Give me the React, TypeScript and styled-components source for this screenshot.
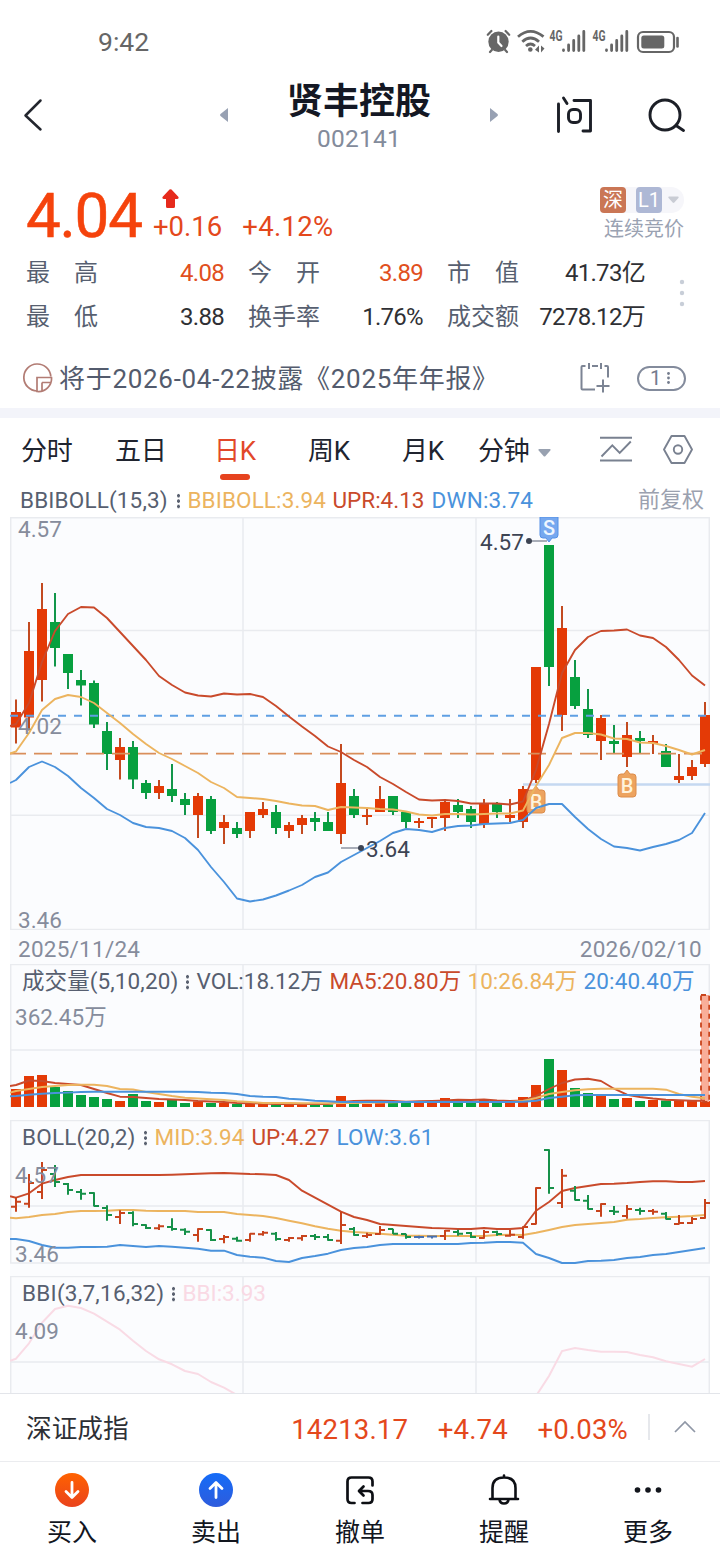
import React from 'react';
import styled, { createGlobalStyle } from 'styled-components';

const RED = '#e43a06';
const GREEN = '#07a03f';
const INK = '#575f70';
const MUTED = '#868c9c';
const LINE_RED = '#c94a2b';
const LINE_GOLD = '#ecb45f';
const LINE_BLUE = '#4a92dc';
const GRID = '#e9ebef';

const GlobalStyle = createGlobalStyle`
  * { box-sizing: border-box; }
  body {
    margin: 0;
    background: #fff;
    font-family: Roboto, "Noto Sans CJK SC", sans-serif;
    line-height: 1.2;
    -webkit-font-smoothing: antialiased;
  }
  svg { display: block; flex: none; }
`;

const Screen = styled.div`
  width: 720px;
  height: 1560px;
  display: flex;
  flex-direction: column;
  overflow: hidden;
  background: #fff;
`;

/* ---------- status bar ---------- */
const StatusBar = styled.header`
  height: 76px;
  padding: 8px 41px 0 98px;
  display: flex;
  align-items: center;
  justify-content: space-between;
  color: #666;
  font-size: 26.5px;
`;

/* ---------- title bar ---------- */
const TitleBar = styled.div`
  height: 82px;
  display: grid;
  grid-template-columns: 220px 278px 222px;
  align-items: center;
`;
const BackCell = styled.div`
  display: flex;
  align-items: center;
  padding: 0 0 4px 23px;
`;
const Switcher = styled.div`
  display: flex;
  justify-content: space-between;
  align-items: center;
  > svg { margin-top: -4px; }
`;
const StockTitle = styled.div`
  display: flex;
  flex-direction: column;
  align-items: center;
`;
const StockName = styled.h1`
  margin: 0;
  font-size: 36px;
  line-height: 44px;
  font-weight: 700;
  color: #141824;
`;
const StockCode = styled.div`
  font-size: 24.5px;
  line-height: 30px;
  letter-spacing: 0.2px;
  color: #838b9b;
`;
const TitleActions = styled.div`
  display: flex;
  align-items: center;
  gap: 52px;
  padding: 0 0 4px 56px;
`;

/* ---------- quote ---------- */
const Quote = styled.section`
  height: 250px;
  padding: 24px 34px 0 26px;
`;
const PriceRow = styled.div`
  height: 68px;
  display: flex;
  align-items: flex-start;
`;
const Price = styled.div`
  width: 127px;
  font-size: 62px;
  line-height: 68px;
  letter-spacing: -1.3px;
  color: #f5430c;
  -webkit-text-stroke: 0.5px #f5430c;
`;
const Change = styled.div`
  flex: 1;
  display: flex;
  flex-direction: column;
  padding-top: 7px;
  color: #e4481c;
  font-size: 27.5px;
  line-height: 38px;
  svg { margin-left: 9px; }
`;
const ChangeValues = styled.div`
  display: flex;
  gap: 20px;
  span + span { letter-spacing: 0.3px; }
`;
const Market = styled.div`
  display: flex;
  flex-direction: column;
  align-items: flex-end;
  padding-top: 5px;
  margin-right: 2px;
  color: #9aa2b2;
  font-size: 20px;
  line-height: 32px;
`;
const TagPill = styled.div`
  width: 84px;
  height: 26px;
  display: flex;
  align-items: center;
  border-radius: 5px 13px 13px 5px;
  background: #f6f6fa;
`;
const Tag = styled.span<{ $bg: string; $gap: number }>`
  width: 26px;
  height: 26px;
  margin-right: ${p => p.$gap}px;
  border-radius: 4px;
  background: ${p => p.$bg};
  color: #fff;
  font-size: 20px;
  line-height: 27px;
  text-align: center;
`;
const StatsArea = styled.div`
  display: flex;
  justify-content: space-between;
`;
const Stats = styled.dl`
  margin: 0;
  padding-top: 1px;
  display: grid;
  grid-template-columns: 73px 125px 24px 72px 103px 24px 72px 126px;
  grid-auto-rows: 44px;
  align-items: center;
  font-size: 24px;
  color: #333;
`;
const StatLabel = styled.dt<{ $col: number }>`
  grid-column: ${p => p.$col};
  color: ${INK};
`;
const StatValue = styled.dd<{ $hot?: boolean }>`
  margin: 0;
  text-align: right;
  white-space: nowrap;
  letter-spacing: -0.7px;
  color: ${p => (p.$hot ? '#e14f20' : '#2f3034')};
`;
const Notice = styled.div`
  height: 78px;
  margin-left: -3px;
  display: flex;
  align-items: center;
  font-size: 26px;
  color: #535b6d;
`;
const NoticeText = styled.span`
  flex: 1;
  margin-left: 6px;
  padding-top: 3px;
  letter-spacing: 0.7px;
  white-space: nowrap;
`;
const CountPill = styled.span`
  width: 49px;
  height: 25px;
  margin-left: 27px;
  padding-right: 3px;
  display: flex;
  align-items: center;
  justify-content: center;
  gap: 6px;
  border: 2px solid #838b9c;
  border-radius: 13px;
  font-size: 20px;
  line-height: 21px;
  color: #747c8d;
`;
const Band = styled.div`
  height: 10px;
  background: #f3f4fa;
`;

/* ---------- period tabs ---------- */
const Tabs = styled.nav`
  height: 66px;
  padding: 0 0 0 21px;
  display: grid;
  grid-template-columns: 94px 99px 94px 94px 76px 122px 63px 1fr;
  align-items: center;
  font-size: 26px;
  color: #20242f;
  > svg { margin-top: -3px; }
`;
const Tab = styled.div<{ $active?: boolean }>`
  position: relative;
  width: max-content;
  height: 66px;
  padding-top: 2px;
  display: flex;
  align-items: center;
  gap: 9px;
  letter-spacing: -0.3px;
  color: ${p => (p.$active ? '#e2482a' : 'inherit')};
  svg { margin-top: 1px; }
  &::after {
    content: '';
    display: ${p => (p.$active ? 'block' : 'none')};
    position: absolute;
    left: 6px;
    bottom: 4px;
    width: 30px;
    height: 6px;
    border-radius: 3px;
    background: #e6431f;
  }
`;

/* ---------- charts ---------- */
const Charts = styled.main`
  height: 909px;
  padding: 0 10px;
  overflow: hidden;
`;
const Legend = styled.div<{ $over?: boolean }>`
  ${p => (p.$over ? 'position: absolute; left: 12px; top: 1px; width: 688px;' : 'padding: 0 6px 0 10px;')}
  height: 33px;
  display: flex;
  align-items: center;
  font-size: 22.5px;
  white-space: nowrap;
`;
const LegendItem = styled.span<{ $w: number; $c: string; $ls?: number }>`
  width: ${p => p.$w}px;
  flex: none;
  color: ${p => p.$c};
  letter-spacing: ${p => p.$ls ?? 0}px;
`;
const LegendDots = styled.i`
  width: 2.5px;
  height: 16px;
  margin-right: 8px;
  background: radial-gradient(circle at 50% 50%, #5a6170 1.4px, transparent 1.7px) 0 0 / 2.5px 5.4px;
`;
const Adjust = styled.span`
  margin-left: auto;
  font-size: 22px;
  color: #9ba1af;
`;
const Panel = styled.section<{ $h: number }>`
  position: relative;
  height: ${p => p.$h}px;
  background: #fbfcfe;
  overflow: hidden;
`;
const DateRow = styled.div`
  height: 34px;
  display: flex;
  align-items: center;
  justify-content: space-between;
  padding: 5px 8px 0;
  background: #fbfcfe;
  font-size: 22.5px;
  letter-spacing: 0.25px;
  color: ${MUTED};
`;

/* ---------- bottom ---------- */
const IndexBar = styled.div`
  height: 69px;
  padding: 3px 24px 0 26px;
  display: flex;
  align-items: center;
  border-top: 1.5px solid #e3e5ea;
  border-bottom: 1px solid #ebecef;
  font-size: 27.6px;
  color: #e4481c;
  background: #fff;
  svg { margin-top: -5px; }
`;
const IndexName = styled.span`
  width: 266px;
  font-size: 25.7px;
  color: #2d2f35;
`;
const IndexValue = styled.span<{ $w: number }>`
  width: ${p => p.$w}px;
  padding-top: 1px;
  letter-spacing: 0.15px;
`;
const Divider = styled.i`
  width: 2px;
  height: 26px;
  margin: -5px 24px 0 0;
  background: #e6e8ec;
`;
const NavBar = styled.footer`
  height: 98px;
  display: grid;
  grid-template-columns: repeat(5, 1fr);
  font-size: 25px;
  line-height: 32px;
  color: #12161f;
`;
const NavItem = styled.div`
  display: flex;
  flex-direction: column;
  align-items: center;
  padding-top: 11px;
  gap: 10px;
`;

/* ---------- data ---------- */
const X0 = 16;
const STEP = 13;
const xAt = (i: number) => X0 + STEP * i;

// high, low, body top, body bottom, rising
type Candle = [number, number, number, number, 0 | 1];
const candles: Candle[] = [
  [699.5, 743.5, 712, 727.5, 1], [622, 730.5, 651, 717.5, 1], [583, 701.5, 609, 680, 1], [593, 666.5, 622, 648, 0],
  [654, 689, 654, 673, 0], [670, 705.5, 680, 685.5, 0], [680.5, 728, 683, 724.5, 0], [722, 770, 731, 754, 0],
  [738, 779.5, 747, 760, 1], [741, 789, 747, 779.5, 0], [780, 799, 783, 793, 0], [780, 799, 786, 793, 1],
  [764, 802, 789, 796, 0], [793, 815, 799, 805, 0], [793, 838, 796, 815, 1], [796, 834, 799, 831, 0],
  [815, 844, 822, 828, 1], [822, 838, 828, 834, 0], [812, 838, 812, 831, 1], [802, 818, 809, 815, 1],
  [805, 834, 812, 828, 0], [822, 838, 825, 831, 1], [815, 834, 818, 825, 1], [812, 831, 818, 822, 0],
  [812, 831, 822, 831, 0], [744, 844, 783, 834, 1], [789, 818, 796, 815, 0], [809, 825, 815, 817, 1],
  [786, 812, 799, 812, 1], [796, 815, 796, 812, 0], [812, 828, 812, 822, 0], [818, 828, 821, 823, 1],
  [817, 828, 817, 819, 1], [799, 831, 802, 818, 1], [799, 818, 805, 812, 0], [806, 828, 809, 822, 0],
  [799, 828, 803, 824, 1], [802, 818, 803, 812, 0], [799, 822, 815, 818, 1], [786, 828, 789, 822, 1],
  [667, 783, 667, 780, 1], [545, 686, 545, 667, 0], [606, 731, 628, 715, 1], [660, 709, 677, 706, 0],
  [689, 738, 709, 735, 0], [715, 760, 718, 741, 1], [725, 753, 741, 744, 0], [722, 767, 735, 757, 1],
  [731, 753, 738, 741, 0], [735, 754, 741, 743, 1], [744, 767, 751, 767, 0], [754, 783, 776, 780, 1],
  [760, 780, 767, 776, 1], [702, 767, 715, 764, 1],
];

const upr = [726, 724, 703, 662, 631, 614, 607, 607.5, 618, 632, 646, 660, 676, 685, 692.5, 695.5, 696.5, 693.5, 694.5, 694, 697, 706, 716.5, 726.5, 736, 746.5, 752, 760, 767, 777, 784, 792, 799.5, 800.5, 800, 801, 803.5, 803.5, 803.5, 804.5, 801.5, 770, 724, 673, 650, 637, 631, 630.5, 629.5, 635.5, 638, 647, 660, 675.5, 685.5];
const bbiMid = [753.5, 751.5, 733, 710, 699, 695, 697, 703, 713, 723, 734, 744, 753, 759, 766, 773, 782, 788, 797, 798, 799, 801, 803.5, 805.5, 806, 810, 807, 807.5, 808, 809, 809.5, 811.5, 814.5, 815.5, 814, 814, 814.5, 814, 813.5, 813.5, 810.5, 786, 765, 738, 733, 733, 734.5, 738.5, 739, 742.5, 743, 746, 750, 754.5, 750];
const dwn = [783, 780, 767, 761.5, 767, 776, 788, 798, 809, 815, 823, 827, 828, 831, 838, 850, 867, 882, 898.5, 901.5, 899.5, 895.5, 890.5, 885, 877, 872.5, 862, 855, 848, 841, 833, 829, 830, 832, 828, 826, 825.5, 824, 823.5, 823, 820, 808, 804, 804, 817, 829, 839, 846.5, 848, 850.5, 847, 844, 840, 833, 813];

const volumes = [1089, 1076, 1075, 1087, 1091, 1095, 1097, 1099, 1101, 1094, 1101, 1102, 1100, 1103, 1101.5, 1103, 1103, 1104, 1104, 1104, 1104.5, 1104.5, 1104.5, 1105, 1104.5, 1096, 1103, 1104, 1103, 1103, 1103, 1103, 1102, 1098, 1099, 1102, 1100, 1102, 1102.5, 1097, 1085, 1059, 1070, 1088, 1093, 1095, 1099, 1098, 1101, 1100, 1100.5, 1101, 1101, 1101];
const ma5 = [1086, 1085, 1080.5, 1081, 1083, 1084, 1085, 1089, 1093, 1096.7, 1097, 1098, 1099, 1099.5, 1100, 1101, 1101.5, 1102, 1103, 1103.3, 1103.6, 1104, 1104, 1104, 1104, 1104, 1102, 1101, 1100.7, 1100.7, 1101, 1101.7, 1101.3, 1101, 1100.5, 1099.7, 1100, 1099.5, 1100.5, 1101, 1100.5, 1096, 1089, 1083, 1079.5, 1078.7, 1081, 1088.7, 1094.7, 1097, 1098.5, 1099.7, 1100.3, 1100.7, 1100.7];
const ma10 = [1092.7, 1091, 1089, 1087, 1086, 1085, 1084.7, 1084.7, 1086, 1089, 1089.5, 1092, 1094, 1096, 1097.7, 1098.5, 1099.3, 1100, 1101.3, 1102, 1103, 1103, 1103, 1103.3, 1103.3, 1103.3, 1103, 1103, 1102.7, 1102.5, 1102.3, 1102, 1102, 1102, 1102, 1102, 1102, 1102, 1102, 1102, 1101, 1098, 1094, 1092, 1090.3, 1089.3, 1088.7, 1088.7, 1088.7, 1088.7, 1088.7, 1089.7, 1094, 1096.7, 1098.3];
const ma20 = [1096.3, 1096, 1094.7, 1093.7, 1093, 1092.6, 1092, 1091.7, 1091.7, 1091.7, 1091.7, 1091.7, 1091.7, 1091.7, 1091.7, 1092, 1092.7, 1093, 1094, 1096, 1096.7, 1097, 1098.7, 1099.5, 1100.7, 1101.3, 1102, 1102, 1102, 1102, 1102, 1102, 1102, 1102, 1102, 1102, 1102, 1102, 1102, 1102, 1101.7, 1100.7, 1098, 1096.7, 1095.3, 1095, 1095, 1095, 1095, 1095, 1095, 1095, 1095, 1095, 1095];

// high, low, open, close, colour key
type Ohlc = [number, number, number, number, 'r' | 'g' | 'b'];
const ohlc: Ohlc[] = [
  [1197, 1211.7, 1206.7, 1201.7, 'r'], [1174, 1207.7, 1203.7, 1183, 'r'], [1162, 1199, 1192, 1170, 'r'], [1165, 1187, 1174, 1182, 'g'],
  [1183, 1194.7, 1184, 1190, 'g'], [1189, 1199.7, 1192, 1193.7, 'g'], [1192.3, 1206.5, 1193, 1206, 'g'], [1205.3, 1220.7, 1208, 1215, 'g'],
  [1210.3, 1224, 1217, 1213, 'r'], [1211.3, 1226.3, 1213, 1224, 'g'], [1224.3, 1229, 1225, 1228, 'g'], [1224.3, 1230, 1228.3, 1226.3, 'r'],
  [1218.3, 1230.7, 1227, 1229, 'g'], [1228.3, 1235, 1229.7, 1231.7, 'g'], [1228.3, 1241.7, 1235, 1229, 'r'], [1229.3, 1241, 1230, 1240, 'g'],
  [1235, 1243.3, 1239, 1237, 'r'], [1236.7, 1241.7, 1238.7, 1240.7, 'g'], [1233.3, 1241.7, 1240, 1233.7, 'r'], [1231, 1235.7, 1234.3, 1232.7, 'r'],
  [1232, 1240.7, 1233.7, 1239, 'g'], [1237, 1241.7, 1240, 1238, 'r'], [1235, 1240.7, 1238.3, 1236, 'r'], [1234, 1240, 1236, 1237, 'g'],
  [1234, 1240.7, 1237, 1240, 'g'], [1211.7, 1244, 1240.7, 1225, 'r'], [1227, 1235.7, 1229, 1235, 'g'], [1232.7, 1238, 1236, 1235, 'r'],
  [1226, 1234.7, 1234, 1230, 'r'], [1228.7, 1234, 1229, 1233.7, 'g'], [1233.7, 1238.7, 1234, 1237, 'g'], [1235.7, 1238.5, 1237, 1237, 'b'],
  [1235.7, 1238.5, 1236.5, 1236.5, 'b'], [1230, 1240, 1236, 1230.7, 'r'], [1229.7, 1235.7, 1232, 1233.7, 'g'], [1232, 1238, 1233, 1237, 'g'],
  [1230, 1238.7, 1238, 1232, 'r'], [1230.7, 1235.7, 1232, 1234, 'g'], [1230, 1236.7, 1235.7, 1234.7, 'r'], [1226.3, 1238.7, 1237, 1227, 'r'],
  [1187.3, 1224.5, 1224, 1188, 'r'], [1149.3, 1193.7, 1150, 1188, 'g'], [1169, 1208, 1203, 1175.7, 'r'], [1186, 1200.5, 1190.7, 1200, 'g'],
  [1195, 1209.5, 1200.7, 1209, 'g'], [1203.3, 1216.7, 1211, 1204, 'r'], [1206, 1215, 1211, 1211.7, 'g'], [1205, 1218.7, 1216, 1209, 'r'],
  [1207.7, 1214.7, 1210, 1211, 'g'], [1209, 1214.7, 1211, 1211.7, 'r'], [1212, 1219.5, 1213.7, 1219, 'g'], [1215, 1224.5, 1224, 1223, 'r'],
  [1217, 1224, 1223, 1219, 'r'], [1199, 1218.7, 1218, 1203, 'r'],
];
const bollUp = [1196.3, 1197.7, 1193.3, 1183.7, 1180, 1177, 1175, 1175, 1175, 1175, 1175, 1175, 1175, 1174.7, 1174.2, 1173.8, 1173.3, 1173, 1173.5, 1174, 1174.2, 1175, 1180, 1190.7, 1197.7, 1204.7, 1211.7, 1217, 1220, 1224, 1225, 1226, 1227, 1228, 1228.4, 1229, 1229, 1228, 1229, 1229, 1228, 1210.7, 1202, 1191, 1188, 1186, 1184, 1183.7, 1183, 1182, 1181.2, 1181.2, 1182, 1182, 1181];
const bollMid = [1217.7, 1218.3, 1217, 1215, 1214, 1212, 1211, 1211, 1210.7, 1210, 1210, 1210.7, 1211, 1211, 1211, 1212, 1212, 1212, 1214, 1215, 1216, 1218, 1220.7, 1223.3, 1226.3, 1228.7, 1230.7, 1232, 1232.7, 1233.7, 1234.7, 1235.7, 1235.7, 1236, 1236, 1236, 1236, 1236, 1235, 1234.7, 1235, 1232.7, 1230, 1227, 1225, 1224, 1223, 1222, 1219.7, 1219, 1218, 1217.3, 1216.7, 1216, 1215];
const bollLow = [1239, 1239, 1241, 1245, 1247.7, 1247.7, 1247, 1247, 1246.7, 1245, 1246, 1247, 1246, 1246.7, 1247.7, 1248.7, 1250.7, 1250.7, 1255, 1256.7, 1257.7, 1261, 1262, 1258, 1256, 1253.7, 1250, 1248, 1247, 1245, 1244, 1244, 1244, 1244, 1244, 1244, 1243, 1242.7, 1242, 1242, 1242.7, 1254, 1258, 1263, 1263, 1261, 1260.7, 1260, 1258, 1257, 1255, 1254, 1252, 1250, 1248];
const bbiLeft = [1360.7, 1358.7, 1343.3, 1322.7, 1309, 1305.7, 1308, 1313.7, 1321.7, 1329.7, 1340.7, 1351, 1359.3, 1364.3, 1371, 1374, 1382, 1387.7, 1395];
const bbiRight = [1396, 1376, 1351, 1348, 1350, 1351.7, 1351.7, 1352, 1355, 1357.3, 1361.3, 1364, 1366.7, 1359];

/* ---------- chart parts ---------- */
// The first value sits on the plot's left edge, the others on successive bars.
const edgeLine = (ys: number[]) => ys.map((y, i) => `${i === 0 ? 10 : xAt(i - 1)},${y}`).join(' ');

const Curve = ({ ys, color, width = 1.9 }: { ys: number[]; color: string; width?: number }) => (
  <polyline points={edgeLine(ys)} fill="none" stroke={color} strokeWidth={width} strokeLinejoin="round" />
);

const Grid = ({ top, bottom, rows }: { top: number; bottom: number; rows: number[] }) => (
  <g stroke={GRID} strokeWidth="1.5">
    {rows.map(y => <line key={y} x1="10" x2="710" y1={y} y2={y} />)}
    {[10.7, 243, 476, 709.3].map(x => <line key={x} x1={x} x2={x} y1={top} y2={bottom} />)}
  </g>
);

const Plot = ({ top, height, children }: { top: number; height: number; children: React.ReactNode }) => (
  <svg width="700" height={height} viewBox={`10 ${top} 700 ${height}`} fontSize="22.5">{children}</svg>
);

const BuyMark = ({ x, y }: { x: number; y: number }) => (
  <g>
    <path d={`M${x - 3} ${y} l3 -4 l3 4 h3 q3 0 3 3 v17 q0 3 -3 3 h-12 q-3 0 -3 -3 v-17 q0 -3 3 -3z`} fill="#eda35f" stroke="#dc8c4b" strokeWidth="1" />
    <text x={x} y={y + 18.5} textAnchor="middle" fontSize="20" fontWeight="500" fill="#fff3dc">B</text>
  </g>
);

const PriceChart = () => (
  <Plot top={517} height={413}>
    <Grid top={517} bottom={930} rows={[517.7, 630.5, 724.5, 815.3, 929.5]} />
    <line x1="523" x2="710" y1="784.5" y2="784.5" stroke="#c5d8f1" strokeWidth="2.6" />
    {candles.map(([hi, lo, t, b, up], i) => (
      <g key={i} fill={up ? RED : GREEN}>
        <rect x={xAt(i) - 1} y={hi} width="2" height={lo - hi} fill={up ? '#c34a20' : '#12964a'} />
        <rect x={xAt(i) - 5} y={t} width="10" height={b - t} />
      </g>
    ))}
    <line x1="10" x2="710" y1="715.7" y2="715.7" stroke="#5f9fe3" strokeWidth="2" strokeDasharray="8 8" />
    <line x1="8" x2="710" y1="753.7" y2="753.7" stroke="#d98e5b" strokeWidth="1.8" strokeDasharray="18 8" />
    <BuyMark x={536} y={790} />
    <BuyMark x={627} y={774} />
    <Curve ys={upr} color={LINE_RED} />
    <Curve ys={bbiMid} color={LINE_GOLD} />
    <Curve ys={dwn} color={LINE_BLUE} />
    <path d="M540 517 h18 v18 q0 3 -3 3 h-3 l-3 4 l-3 -4 h-3 q-3 0 -3 -3z" fill="#76a8ef" stroke="#5590e6" strokeWidth="1" />
    <text x="549" y="534.5" textAnchor="middle" fontSize="20" fontWeight="500" fill="#eef6ff">S</text>
    <g stroke="#8d93a0" strokeWidth="1.5">
      <line x1="529" x2="547" y1="541" y2="541" />
      <line x1="341" x2="361" y1="848" y2="848" />
    </g>
    <g fill="#3d4453">
      <circle cx="529" cy="541" r="3" />
      <circle cx="361" cy="848" r="3" />
      <text x="480" y="550">4.57</text>
      <text x="366" y="857">3.64</text>
    </g>
    <g fill={MUTED}>
      <text x="18" y="537">4.57</text>
      <text x="18" y="734">4.02</text>
      <text x="18" y="928">3.46</text>
    </g>
  </Plot>
);

const VolumeChart = () => (
  <Plot top={964} height={156}>
    <Grid top={964} bottom={1107} rows={[964.5, 1050]} />
    {volumes.map((y, i) => (
      <rect key={i} x={xAt(i) - 5} y={y} width="10" height={1107 - y} fill={candles[i][4] ? RED : GREEN} />
    ))}
    <rect x="701" y="995" width="8.2" height="107" fill="#f9ae99" stroke="#c9441c" strokeWidth="1.8" strokeDasharray="5 4" />
    <Curve ys={ma5} color={LINE_RED} />
    <Curve ys={ma10} color={LINE_GOLD} />
    <Curve ys={ma20} color={LINE_BLUE} />
    <text x="15" y="1025" fill={MUTED} fontSize="22.5">362.45万</text>
  </Plot>
);

const ohlcColor = { r: '#c8431c', g: '#169149', b: '#476fb0' };

const BollChart = () => (
  <Plot top={1120} height={156}>
    <Grid top={1120} bottom={1263} rows={[1120.5, 1206, 1263]} />
    <Curve ys={bollUp} color={LINE_RED} />
    <Curve ys={bollMid} color={LINE_GOLD} />
    <Curve ys={bollLow} color={LINE_BLUE} />
    {ohlc.map(([hi, lo, o, c, k], i) => (
      <path key={i} d={`M${xAt(i)} ${hi}V${lo}M${xAt(i) - 5} ${o}H${xAt(i)}M${xAt(i)} ${c}H${xAt(i) + 5}`} stroke={ohlcColor[k]} strokeWidth="2" />
    ))}
    <text x="15" y="1183" fill={MUTED}>4.57</text>
    <text x="15" y="1262" fill={MUTED}>3.46</text>
  </Plot>
);

const BbiChart = () => (
  <Plot top={1276} height={118}>
    <Grid top={1276} bottom={1394} rows={[1276.5, 1362]} />
    <Curve ys={bbiLeft} color="#f9dbe5" width={2} />
    <polyline points={bbiRight.map((y, i) => `${xAt(i + 40)},${y}`).join(' ')} fill="none" stroke="#f9dbe5" strokeWidth="2" />
    <text x="15" y="1339" fill={MUTED}>4.09</text>
  </Plot>
);

/* ---------- icons ---------- */
const StatusIcons = () => (
  <svg width="193" height="30" viewBox="486 27 193 30" fill="#666" stroke="#666">
    <g strokeWidth="2.2" fill="none" strokeLinecap="round">
      <circle cx="498.5" cy="41.7" r="10.2" fill="#666" stroke="none" />
      <path d="M487.8 34.8L491.4 31M509.2 34.8L505.6 31M491.8 50L490 52M505.2 50L507 52" />
      <path d="M498.3 36.500V42.500L501.500 46" stroke="#fff" />
    </g>
    <g fill="none" strokeWidth="2.8">
      <path d="M518 36.7Q530.5 26 543.5 36.7M522.3 41.7Q530.5 34.2 539 41.7M526 46Q530.5 42 535 46" />
      <circle cx="530.3" cy="49.5" r="2.3" fill="#666" stroke="none" />
    </g>
    <path d="M539 45.5V52.5L535 49.7zM541 45.5V52.5L544.5 48.5z" stroke="none" />
    {[0, 43].map(dx => (
      <g key={dx} transform={`translate(${dx} 0)`}>
        <text x="549.5" y="40.500" fontSize="14" fontWeight="700" stroke="none" textLength="13" lengthAdjust="spacingAndGlyphs">4G</text>
        <g strokeWidth="2.8" strokeLinecap="round">
          <path d="M563.5 50.5V50M568.6 50.5V45M573.7 50.5V40.5M578.8 50.5V36M583.8 50.5V31.5" />
        </g>
      </g>
    ))}
    <rect x="638" y="32" width="36" height="20" rx="5" fill="none" strokeWidth="2.2" />
    <rect x="641.3" y="35.5" width="23" height="13" rx="2.5" stroke="none" />
    <path d="M677.5 38V46.5" strokeWidth="2.6" strokeLinecap="round" />
  </svg>
);

const TabTriangle = ({ color = '#98a1b0', w = 13 }: { color?: string; w?: number }) => (
  <svg width={w} height="8" viewBox="0 0 13 8"><path d="M1.3 0H11.7Q13.2 .2 12.3 1.5L7.5 7Q6.5 8 5.5 7L.7 1.5Q-.2 .2 1.3 0z" fill={color} /></svg>
);

const RoundArrow = ({ down }: { down?: boolean }) => (
  <svg width="34" height="34" viewBox="0 0 34 34">
    <defs>
      <linearGradient id={down ? 'buyFill' : 'sellFill'} x1="0" y1="0" x2="0" y2="1">
        <stop offset="0" stopColor={down ? '#ff6200' : '#156cf8'} />
        <stop offset="1" stopColor={down ? '#ea431d' : '#2e5bdc'} />
      </linearGradient>
    </defs>
    <circle cx="17" cy="17" r="17" fill={down ? 'url(#buyFill)' : 'url(#sellFill)'} />
    <path
      transform={down ? undefined : 'rotate(180 17 17)'}
      d="M17 9.5V24M11 18.5L17 24.5L23 18.5"
      fill="none" stroke="#fff" strokeWidth="2.8" strokeLinecap="round" strokeLinejoin="round"
    />
  </svg>
);

const App = () => (
  <Screen>
    <GlobalStyle />
    <StatusBar>
      <span>9:42</span>
      <StatusIcons />
    </StatusBar>

    <TitleBar>
      <BackCell>
        <svg width="20" height="34" viewBox="0 0 20 34"><path d="M17.5 2.5L2.5 17.5L17.5 31.5" fill="none" stroke="#23262e" strokeWidth="2.5" strokeLinecap="round" strokeLinejoin="round" /></svg>
      </BackCell>
      <Switcher>
        <svg width="8" height="14" viewBox="0 0 8 14"><path d="M8 0V14L.5 8Q-.3 7 .5 6z" fill="#98a1b3" /></svg>
        <StockTitle>
          <StockName>贤丰控股</StockName>
          <StockCode>002141</StockCode>
        </StockTitle>
        <svg width="8" height="14" viewBox="0 0 8 14"><path d="M0 0V14L7.5 8Q8.3 7 7.5 6z" fill="#98a1b3" /></svg>
      </Switcher>
      <TitleActions>
        <svg width="40" height="40" viewBox="554 95 40 40" fill="none" stroke="#1c1f27" strokeWidth="2.9" strokeLinecap="round" strokeLinejoin="round">
          <path d="M558.5 104V131.5M563.5 98L567 103.5M574 100.5H590.5V131H583" />
          <rect x="568.5" y="109.5" width="12" height="13" rx="4.5" />
        </svg>
        <svg width="40" height="40" viewBox="646 95 40 40" fill="none" stroke="#1c1f27" strokeWidth="2.9" strokeLinecap="round">
          <circle cx="665" cy="115" r="15" />
          <path d="M676 125.5L683.5 130.5" />
        </svg>
      </TitleActions>
    </TitleBar>

    <Quote>
      <PriceRow>
        <Price>4.04</Price>
        <Change>
          <svg width="17" height="19" viewBox="0 0 17 19"><path d="M7.5 .6Q8.5-.3 9.5 .6L16.5 8Q17 10 15 10H13V17.5Q13 19 11.5 19H5.5Q4 19 4 17.5V10H2Q0 10 .5 8z" fill="#e62a1c" /></svg>
          <ChangeValues>
            <span>+0.16</span>
            <span>+4.12%</span>
          </ChangeValues>
        </Change>
        <Market>
          <TagPill>
            <Tag $bg="#ca7655" $gap={10}>深</Tag>
            <Tag $bg="#aeb8d5" $gap={6}>L1</Tag>
            <TabTriangle color="#c9ccd4" w={11} />
          </TagPill>
          <span>连续竞价</span>
        </Market>
      </PriceRow>
      <StatsArea>
        <Stats>
          <StatLabel $col={1}>最　高</StatLabel><StatValue $hot>4.08</StatValue>
          <StatLabel $col={4}>今　开</StatLabel><StatValue $hot>3.89</StatValue>
          <StatLabel $col={7}>市　值</StatLabel><StatValue>41.73亿</StatValue>
          <StatLabel $col={1}>最　低</StatLabel><StatValue>3.88</StatValue>
          <StatLabel $col={4}>换手率</StatLabel><StatValue>1.76%</StatValue>
          <StatLabel $col={7}>成交额</StatLabel><StatValue>7278.12万</StatValue>
        </Stats>
        <svg width="8" height="88" viewBox="0 0 8 88" fill="#c8ced8"><circle cx="4" cy="32" r="2.2" /><circle cx="4" cy="43" r="2.2" /><circle cx="4" cy="54" r="2.2" /></svg>
      </StatsArea>
      <Notice>
        <svg width="30" height="30" viewBox="0 0 30 30" fill="none" stroke="#b27c74" strokeWidth="1.7">
          <path d="M14 28A13.500 13.500 0 1 1 27.800 13.500" />
          <path d="M14 14.500H28.500A13 13 0 0 1 14 28.500zM19 19.500V28M19 19.500H27.500" />
        </svg>
        <NoticeText>将于2026-04-22披露《2025年年报》</NoticeText>
        <svg width="30" height="32" viewBox="0 0 30 32" fill="none" stroke="#7c8494" strokeWidth="2">
          <path d="M5.5 4H2.5Q1.5 4 1.5 5V26.5Q1.5 27.5 2.5 27.5H15M9 1V7M12 4H18M21 1V7M24.5 4H27Q28 4 28 5V15.5M23 17.5V30.5M16.5 24H29.5" />
        </svg>
        <CountPill>
          <span>1</span>
          <svg width="3" height="12" viewBox="0 0 3 12" fill="#747c8d"><circle cx="1.5" cy="1.5" r="1.4" /><circle cx="1.5" cy="6" r="1.4" /><circle cx="1.5" cy="10.5" r="1.4" /></svg>
        </CountPill>
      </Notice>
    </Quote>
    <Band />

    <Tabs>
      <Tab>分时</Tab>
      <Tab>五日</Tab>
      <Tab $active>日K</Tab>
      <Tab>周K</Tab>
      <Tab>月K</Tab>
      <Tab>分钟<TabTriangle /></Tab>
      <svg width="32" height="28" viewBox="0 0 32 28" fill="none" stroke="#798190" strokeWidth="1.9">
        <path d="M0 1.8H32M0 24.5H32M1.5 20.5L12.3 9.3L19.7 17L30.8 5.5" />
      </svg>
      <svg width="30" height="30" viewBox="0 0 30 30" fill="none" stroke="#798190" strokeWidth="1.9" strokeLinejoin="round">
        <path d="M8.5 1H21.5L29 14.5L21.5 28H8.5L1 14.5z" />
        <circle cx="15" cy="14.5" r="4.2" />
      </svg>
    </Tabs>

    <Charts>
      <Legend>
        <LegendItem $w={157} $c={INK} $ls={0.15}>BBIBOLL(15,3)</LegendItem>
        <LegendDots />
        <LegendItem $w={145} $c={LINE_GOLD} $ls={0.1}>BBIBOLL:3.94</LegendItem>
        <LegendItem $w={99} $c={LINE_RED}>UPR:4.13</LegendItem>
        <LegendItem $w={110} $c={LINE_BLUE} $ls={0.2}>DWN:3.74</LegendItem>
        <Adjust>前复权</Adjust>
      </Legend>
      <Panel $h={413}><PriceChart /></Panel>
      <DateRow><span>2025/11/24</span><span>2026/02/10</span></DateRow>
      <Panel $h={156}>
        <VolumeChart />
        <Legend $over>
          <LegendItem $w={164} $c={INK} $ls={0.1}>成交量(5,10,20)</LegendItem>
          <LegendDots />
          <LegendItem $w={133} $c={INK}>VOL:18.12万</LegendItem>
          <LegendItem $w={138} $c={LINE_RED}>MA5:20.80万</LegendItem>
          <LegendItem $w={116} $c={LINE_GOLD}>10:26.84万</LegendItem>
          <LegendItem $w={110} $c={LINE_BLUE} $ls={0.15}>20:40.40万</LegendItem>
        </Legend>
      </Panel>
      <Panel $h={156}>
        <BollChart />
        <Legend $over>
          <LegendItem $w={122} $c={INK} $ls={0.2}>BOLL(20,2)</LegendItem>
          <LegendDots />
          <LegendItem $w={97} $c={LINE_GOLD}>MID:3.94</LegendItem>
          <LegendItem $w={85} $c={LINE_RED}>UP:4.27</LegendItem>
          <LegendItem $w={100} $c={LINE_BLUE} $ls={0.1}>LOW:3.61</LegendItem>
        </Legend>
      </Panel>
      <Panel $h={118}>
        <BbiChart />
        <Legend $over>
          <LegendItem $w={150} $c={INK} $ls={0.25}>BBI(3,7,16,32)</LegendItem>
          <LegendDots />
          <LegendItem $w={90} $c="#f9d9e4">BBI:3.93</LegendItem>
        </Legend>
      </Panel>
    </Charts>

    <IndexBar>
      <IndexName>深证成指</IndexName>
      <IndexValue $w={147}>14213.17</IndexValue>
      <IndexValue $w={100}>+4.74</IndexValue>
      <IndexValue $w={111}>+0.03%</IndexValue>
      <Divider />
      <svg width="22" height="14" viewBox="0 0 22 14"><path d="M1 12L11 2L21 12" fill="none" stroke="#8f97a6" strokeWidth="1.7" /></svg>
    </IndexBar>
    <NavBar>
      <NavItem><RoundArrow down />买入</NavItem>
      <NavItem><RoundArrow />卖出</NavItem>
      <NavItem>
        <svg width="34" height="34" viewBox="343 1473 34 34" fill="none" stroke="#0d0f14" strokeWidth="2.7" strokeLinecap="round" strokeLinejoin="round">
          <path d="M372.5 1485.5V1481.5Q372.5 1477.5 368.5 1477.5H351.5Q347.5 1477.5 347.5 1481.5V1499Q347.5 1503 351.5 1503H354.5" />
          <path d="M363.5 1486.5L359 1491L363.5 1495.5M359.5 1491H368Q372.5 1491 372.5 1495V1499Q372.5 1503 368.5 1503H362.5" />
        </svg>
        撤单
      </NavItem>
      <NavItem>
        <svg width="34" height="34" viewBox="487 1473 34 34" fill="none" stroke="#0d0f14" strokeWidth="2.6" strokeLinecap="round" strokeLinejoin="round">
          <path d="M492.5 1498.5V1488Q492.5 1477.5 504 1477.5Q515.5 1477.5 515.5 1488V1498.5M490 1499H518M504 1475.5V1477M499.5 1499.5Q500 1503.5 504 1503.5Q508 1503.5 508.5 1499.5" />
        </svg>
        提醒
      </NavItem>
      <NavItem>
        <svg width="34" height="34" viewBox="0 0 34 34" fill="#12151c"><circle cx="6.5" cy="17" r="2.8" /><circle cx="17" cy="17" r="2.8" /><circle cx="27.5" cy="17" r="2.8" /></svg>
        更多
      </NavItem>
    </NavBar>
  </Screen>
);

export default App;
